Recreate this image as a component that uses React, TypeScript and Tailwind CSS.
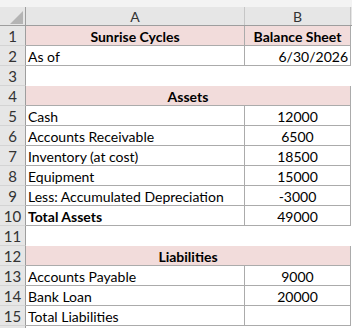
import React from 'react';

type Row = {
  n: number;
  a?: string;
  b?: string;
  kind?: 'blank' | 'title' | 'section' | 'data';
  bold?: boolean;
  bAlign?: 'center' | 'right';
};

const rows: Row[] = [
  { n: 1, a: 'Sunrise Cycles', b: 'Balance Sheet', kind: 'title' },
  { n: 2, a: 'As of', b: '6/30/2026', bAlign: 'right' },
  { n: 3, kind: 'blank' },
  { n: 4, a: 'Assets', kind: 'section' },
  { n: 5, a: 'Cash', b: '12000' },
  { n: 6, a: 'Accounts Receivable', b: '6500' },
  { n: 7, a: 'Inventory (at cost)', b: '18500' },
  { n: 8, a: 'Equipment', b: '15000' },
  { n: 9, a: 'Less: Accumulated Depreciation', b: '-3000' },
  { n: 10, a: 'Total Assets', b: '49000', bold: true },
  { n: 11, kind: 'blank' },
  { n: 12, a: 'Liabilities', kind: 'section' },
  { n: 13, a: 'Accounts Payable', b: '9000' },
  { n: 14, a: 'Bank Loan', b: '20000' },
  { n: 15, a: 'Total Liabilities', b: '' },
];

const RowNum: React.FC<{ n?: number }> = ({ n }) => (
  <div className="w-[26px] shrink-0 h-full bg-[#e6e6e6] border-r border-b border-r-[#9e9e9e] border-b-[#d4d4d4] flex items-center justify-center pt-[2px] text-[#333] text-[15px]">
    {n}
  </div>
);

const SheetRow: React.FC<{ row: Row }> = ({ row }) => {
  if (row.kind === 'blank') {
    return (
      <div className="flex h-[20px]">
        <RowNum n={row.n} />
        <div className="flex-1 bg-white" />
      </div>
    );
  }
  if (row.kind === 'section') {
    return (
      <div className="flex h-[20px]">
        <RowNum n={row.n} />
        <div className="w-[325px] h-full bg-[#f2dcdb] border-r border-b border-[#ababab] flex items-center justify-center pt-[2px] font-bold">
          {row.a}
        </div>
        <div className="flex-1" />
      </div>
    );
  }
  const title = row.kind === 'title';
  return (
    <div className="flex h-[20px]">
      <RowNum n={row.n} />
      <div
        className={`w-[219px] h-full border-r border-b border-[#ababab] flex items-center pt-[2px] whitespace-nowrap ${
          title ? 'bg-[#f2dcdb] justify-center font-bold' : 'bg-white pl-[2px]'
        } ${row.bold ? 'font-bold' : ''}`}
      >
        {row.a}
      </div>
      <div
        className={`w-[106px] h-full border-r border-b border-[#ababab] flex items-center pt-[2px] whitespace-nowrap ${
          title ? 'bg-[#f2dcdb] font-bold justify-center' : 'bg-white'
        } ${row.bAlign === 'right' ? 'justify-end pr-[2px]' : 'justify-center'}`}
      >
        {row.b}
      </div>
      <div className="flex-1" />
    </div>
  );
};

export default function App() {
  return (
    <div
      className="w-[352px] h-[328px] overflow-hidden bg-white text-black text-[14px] leading-none"
      style={{ fontFamily: 'Lato, "Liberation Sans", sans-serif' }}
    >
      <div className="h-[7px] bg-[#f3f3f3]" />
      <div className="flex h-[19px] bg-[#e6e6e6] border-b border-[#9e9e9e] text-[#333] text-[14px]">
        <div className="relative w-[26px] shrink-0 border-r border-[#9e9e9e]">
          <svg className="absolute left-[10px] top-[4px]" width="13" height="13" viewBox="0 0 13 13">
            <polygon points="13,0 13,13 0,13" fill="#b4b4b4" />
          </svg>
        </div>
        <div className="w-[219px] border-r border-[#c6c6c6] flex items-center justify-center pt-[2px]">A</div>
        <div className="w-[106px] border-r border-[#c6c6c6] flex items-center justify-center pt-[2px]">B</div>
        <div className="flex-1" />
      </div>
      {rows.map((r) => (
        <SheetRow key={r.n} row={r} />
      ))}
      <div className="flex h-[20px]">
        <RowNum />
        <div className="flex-1" />
      </div>
    </div>
  );
}
